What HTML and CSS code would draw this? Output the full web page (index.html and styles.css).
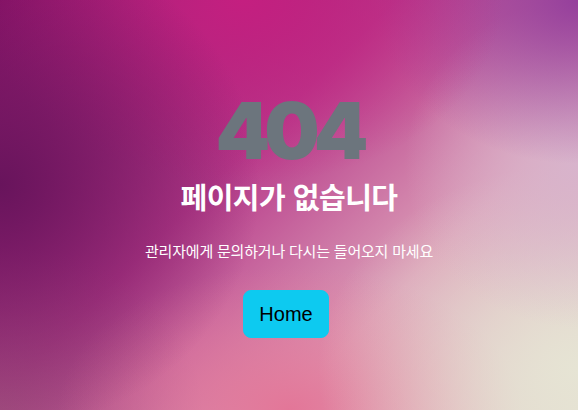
FILE: index.html
```html
<!DOCTYPE html>
<html lang="ko">
<head>
    <meta charset="UTF-8">
    <meta name="viewport" content="width=device-width, initial-scale=1.0">
    <title>404 - 페이지가 없습니다</title>
    <link rel="stylesheet" href="styles.css">
</head>
<body>
    <main class="error-page">
        <h1 class="error-code">404</h1>
        <h2 class="error-title">페이지가 없습니다</h2>
        <p class="error-text">관리자에게 문의하거나 다시는 들어오지 마세요</p>
        <a class="btn-home" href="/">Home</a>
    </main>
</body>
</html>
```

FILE: styles.css
```css
* {
    margin: 0;
    padding: 0;
    box-sizing: border-box;
}

/* Fundo */
body {
    font-family: "Noto Sans CJK KR", "Noto Sans", sans-serif;
    color: #fff;
    min-height: 100vh;
    background-color: #c65d98;
    background-image:
        radial-gradient(ellipse 45% 60% at 0% 45%, #68145c, rgba(104, 20, 92, 0) 100%),
        radial-gradient(ellipse 45% 45% at 42% 0%, #c41f80, rgba(196, 31, 128, 0) 100%),
        radial-gradient(ellipse 35% 40% at 100% 0%, #953f9c, rgba(149, 63, 156, 0) 100%),
        radial-gradient(ellipse 30% 40% at 100% 40%, #d8b4cc, rgba(216, 180, 204, 0) 100%),
        radial-gradient(ellipse 45% 50% at 100% 90%, #e6e4d4, rgba(230, 228, 212, 0) 100%),
        radial-gradient(ellipse 40% 35% at 50% 100%, #e37698, rgba(227, 118, 152, 0) 100%),
        radial-gradient(ellipse 35% 40% at 0% 100%, #a24d7f, rgba(162, 77, 127, 0) 100%),
        linear-gradient(135deg, #8a1268 0%, #b73a8a 40%, #dca0b8 70%, #e2dccf 100%);
}

/* Conteudo */
.error-page {
    min-height: 100vh;
    display: flex;
    flex-direction: column;
    align-items: center;
    padding-top: 92px;
    text-align: center;
}

.error-code {
    font-family: Inter, "Noto Sans", sans-serif;
    font-size: 78px;
    font-weight: 900;
    line-height: 1;
    letter-spacing: -6px;
    color: #6c757d;
}

.error-title {
    margin-top: 9px;
    font-size: 29px;
    font-weight: 700;
    line-height: 1.2;
    letter-spacing: -0.5px;
}

.error-text {
    margin-top: 26px;
    font-size: 15px;
    line-height: 1.5;
    letter-spacing: -0.2px;
}

.btn-home {
    margin-top: 28px;
    margin-right: 6px;
    display: inline-block;
    padding: 8px 15px;
    font-family: "Liberation Sans", Arial, sans-serif;
    font-size: 20px;
    line-height: 1.5;
    color: #000;
    text-decoration: none;
    background-color: #0dcaf0;
    border: 1px solid #0dcaf0;
    border-radius: 8px;
}
```
